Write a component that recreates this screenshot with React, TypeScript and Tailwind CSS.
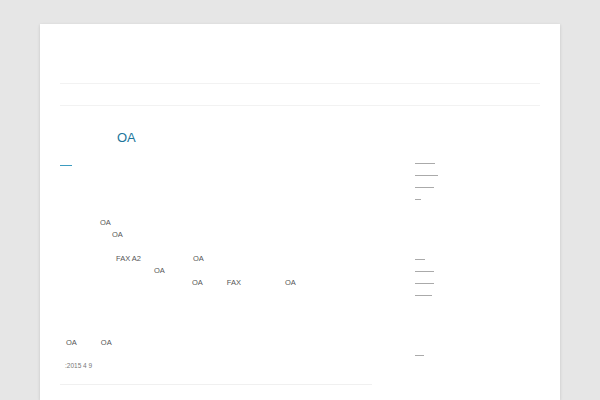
import React from 'react';

const font = { fontFamily: '"Liberation Sans", Arial, sans-serif' };

function Gap({ w }: { w: number }) {
  // stands in for glyphs the screenshot could not render
  const cls: Record<number, string> = {
    6: 'w-[6px]', 24: 'w-[24px]', 28: 'w-[28px]', 40: 'w-[40px]', 44: 'w-[44px]',
    52: 'w-[52px]', 56: 'w-[56px]', 57: 'w-[57px]', 94: 'w-[94px]', 132: 'w-[132px]',
  };
  return <span className={`inline-block ${cls[w]}`} />;
}

function SideLink({ w }: { w: string }) {
  return <div className="h-[12px] flex items-end"><span className={`block ${w} border-b border-[#aaa]`} /></div>;
}

export default function App() {
  return (
    <div className="h-screen bg-[#e6e6e6] pt-[24px] px-[40px] overflow-hidden" style={font}>
      <div className="bg-white shadow-[0_1px_3px_rgba(0,0,0,0.15)] px-[20px] h-[376px]">
        <div className="h-[60px] border-b border-[#f2f2f2]" />
        <div className="h-[22px] border-b border-[#f2f2f2]" />
        <div className="flex">
          <div className="w-[312px]">
            <h1 className="mt-[24px] text-[13px] leading-[16px] text-[#21759b] whitespace-pre"><Gap w={57} />OA</h1>
            <div className="mt-[19px] w-[12px] h-[1px] bg-[#3d9cc0]" />
            <div className="mt-[51px] text-[7.5px] leading-[12px] text-[#555] whitespace-nowrap">
              <div><Gap w={40} />OA</div>
              <div><Gap w={52} />OA</div>
              <div className="h-[12px]" />
              <div><Gap w={56} />FAX A2<Gap w={52} />OA</div>
              <div><Gap w={94} />OA</div>
              <div><Gap w={132} />OA<Gap w={24} />FAX<Gap w={44} />OA</div>
            </div>
            <div className="mt-[48px] text-[7.5px] leading-[12px] text-[#555] whitespace-nowrap">
              <div><Gap w={6} />OA<Gap w={24} />OA</div>
            </div>
            <div className="mt-[12px] text-[6.5px] leading-[10px] text-[#777] whitespace-nowrap">
              <span className="ml-[5px]">:2015 4 9</span>
            </div>
            <div className="mt-[13px] border-b border-[#f0f0f0]" />
          </div>
          <div className="ml-[43px] w-[125px]">
            <div className="mt-[46px]">
              <SideLink w="w-[20px]" />
              <SideLink w="w-[23px]" />
              <SideLink w="w-[19px]" />
              <SideLink w="w-[6px]" />
            </div>
            <div className="mt-[48px]">
              <SideLink w="w-[10px]" />
              <SideLink w="w-[19px]" />
              <SideLink w="w-[19px]" />
              <SideLink w="w-[17px]" />
            </div>
            <div className="mt-[48px]">
              <SideLink w="w-[9px]" />
            </div>
          </div>
        </div>
      </div>
    </div>
  );
}
